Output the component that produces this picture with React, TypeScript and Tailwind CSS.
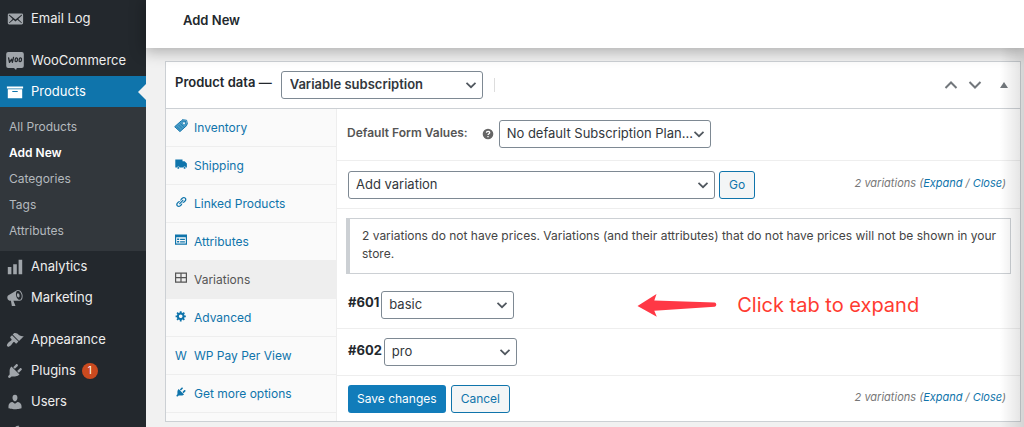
import type { ReactNode } from "react";

const dash = {
  email:
    "M19 14.5v-9c0-.83-.67-1.5-1.5-1.5H3.49c-.83 0-1.5.67-1.5 1.5v9c0 .83.67 1.5 1.5 1.5H17.5c.83 0 1.5-.67 1.5-1.5zm-1.31-9.11c.33.33.15.67-.03.84L13.6 9.95l3.9 4.06c.12.14.2.36.06.51-.13.16-.43.15-.56.05l-4.37-3.73-2.14 1.95-2.13-1.95-4.37 3.73c-.13.1-.43.11-.56-.05-.14-.15-.06-.37.06-.51l3.9-4.06-4.06-3.72c-.18-.17-.36-.51-.03-.84s.67-.17.95.07l6.24 5.04 6.25-5.04c.28-.24.62-.4.95-.07z",
  archive: "M19 4v2H1V4h18zM2 7h16v10H2V7zm11 3V9H7v1h6z",
  chart: "M18 18V2h-4v16h4zm-6 0V7H8v11h4zm-6 0v-8H2v8h4z",
  megaphone:
    "M18.15 5.94c.46 1.62.38 3.22-.02 4.48-.42 1.28-1.26 2.18-2.3 2.48-.16.06-.26.06-.4.06-.06.02-.12.02-.18.02-.06.02-.14.02-.22.02h-6.8l2.22 5.5c.02.14-.06.26-.14.34-.08.1-.24.16-.34.16H6.95c-.1 0-.26-.06-.34-.16-.08-.08-.16-.2-.14-.34l-1-5.5H4.25l-.02-.02c-.5.06-1.08-.18-1.54-.62s-.88-1.08-1.06-1.88c-.24-.8-.2-1.56-.02-2.2.18-.62.58-1.08 1.06-1.3l.02-.02 9-5.4c.1-.06.18-.1.24-.16.06-.04.14-.08.24-.12.16-.08.28-.12.5-.18 1.04-.3 2.24.1 3.22.98s1.84 2.24 2.26 3.86zm-2.58 5.98h-.02c.4-.1.74-.34 1.04-.7.58-.7.86-1.76.86-3.04 0-.64-.1-1.3-.28-1.98-.34-1.36-1.02-2.5-1.78-3.24s-1.68-1.1-2.46-.88c-.82.22-1.4.96-1.7 2-.32 1.04-.28 2.36.06 3.72.38 1.36 1 2.5 1.8 3.24.78.74 1.62 1.1 2.48.88zm-2.54-7.08c.22-.04.42-.02.62.04.38.16.76.48 1.02 1s.42 1.2.42 1.78c0 .3-.04.56-.12.8-.18.48-.44.84-.86.94-.34.1-.8-.06-1.14-.4s-.64-.86-.78-1.5c-.18-.62-.12-1.24.02-1.72s.48-.84.82-.94z",
  appearance:
    "M14.48 11.06L7.41 3.99l1.5-1.5c.5-.56 2.3-.47 3.51.32 1.21.8 1.43 1.28 2.91 2.1 1.18.64 2.45 1.26 4.45.85zm-.71.71L6.7 4.7 4.93 6.47c-.39.39-.39 1.02 0 1.41l1.06 1.06c.39.39.39 1.03 0 1.42-.6.6-1.43 1.11-2.21 1.69-.35.26-.7.53-1.01.84C1.43 14.23.4 16.08 1.4 17.07c.99 1 2.84-.03 4.18-1.36.31-.31.58-.66.85-1.02.57-.78 1.08-1.61 1.69-2.21.39-.39 1.02-.39 1.41 0l1.06 1.06c.39.39 1.02.39 1.41 0z",
  plugins:
    "M13.11 4.36L9.87 7.6 8 5.73l3.24-3.24c.35-.34 1.05-.2 1.56.32.52.51.66 1.21.31 1.55zm-8 1.77l.91-1.12 9.01 9.01-1.19.84c-.71.71-2.63 1.16-3.82 1.16H6.14L4.9 17.26c-.59.59-1.54.59-2.12 0-.59-.58-.59-1.53 0-2.12l1.24-1.24v-3.88c0-1.13.4-3.19 1.09-3.89zm7.26 3.97l3.24-3.24c.34-.35 1.04-.21 1.55.31.52.51.66 1.21.31 1.55l-3.24 3.25z",
  users:
    "M10 9.25c-2.27 0-2.73-3.44-2.73-3.44C7 4.02 7.82 2 9.97 2c2.16 0 2.98 2.02 2.71 3.81 0 0-.41 3.44-2.68 3.44zm0 2.57L12.72 10c2.39 0 4.52 2.33 4.52 4.53v2.49s-3.65 1.13-7.24 1.13c-3.65 0-7.24-1.13-7.24-1.13v-2.49c0-2.25 1.94-4.48 4.47-4.48z",
  wrench:
    "M16.68 9.77c-1.34 1.34-3.3 1.67-4.95.99l-5.41 6.52c-.99.99-2.59.99-3.58 0s-.99-2.59 0-3.57l6.52-5.42c-.68-1.65-.35-3.61.99-4.95 1.28-1.28 3.12-1.62 4.72-1.06l-2.89 2.89 2.82 2.82 2.86-2.87c.53 1.58.18 3.39-1.08 4.65zM3.81 16.210c.4.39 1.04.39 1.430 0 .4-.4.4-1.040 0-1.430-.39-.4-1.030-.4-1.430 0-.39.39-.39 1.030 0 1.430z",
  gear: "M18 12h-2.18c-.17.7-.44 1.35-.81 1.93l1.54 1.54-2.1 2.1-1.54-1.54c-.58.36-1.23.63-1.91.79V19H8v-2.18c-.68-.16-1.33-.43-1.91-.79l-1.54 1.54-2.12-2.12 1.54-1.54c-.36-.58-.63-1.23-.79-1.91H1V9.03h2.17c.16-.7.44-1.35.8-1.94L2.43 5.55l2.1-2.1 1.54 1.54c.58-.37 1.24-.64 1.93-.81V2h3v2.18c.68.16 1.33.43 1.91.79l1.54-1.54 2.12 2.12-1.54 1.54c.36.59.64 1.24.8 1.94H18V12zm-8.5 1.5c1.66 0 3-1.34 3-3s-1.34-3-3-3-3 1.34-3 3 1.34 3 3 3z",
  link: "M17.74 2.76c1.68 1.69 1.68 4.41 0 6.1l-1.53 1.52c-1.12 1.12-2.7 1.47-4.14 1.09l2.62-2.61.76-.77.76-.76c.84-.84.84-2.2 0-3.04-.84-.85-2.2-.85-3.04 0l-.77.76-3.38 3.38c-.37-1.44-.02-3.02 1.1-4.14l1.52-1.53c1.69-1.68 4.42-1.68 6.1 0zM8.59 13.43l5.34-5.34c.42-.42.42-1.1 0-1.52-.44-.43-1.13-.39-1.53 0l-5.33 5.34c-.42.42-.42 1.1 0 1.52.44.43 1.13.39 1.52 0zm-.76 2.29l4.14-4.15c.38 1.44.03 3.02-1.09 4.14l-1.52 1.53c-1.69 1.68-4.41 1.68-6.1 0-1.68-1.68-1.68-4.42 0-6.1l1.53-1.52c1.12-1.12 2.7-1.47 4.14-1.1l-4.14 4.15c-.85.84-.85 2.2 0 3.05.84.84 2.2.84 3.04 0z",
  truck:
    "M.5 2.500h12v3h3.500L19.800 9v7h-1.500a2.300 2.300 0 0 0-4.500 0H7.800a2.300 2.300 0 0 0-4.500 0H.5V2.500zM5.500 14.900a1.600 1.600 0 1 1 0 3.200 1.600 1.600 0 0 1 0-3.200zM16 14.900a1.600 1.600 0 1 1 0 3.200 1.600 1.600 0 0 1 0-3.200z",
  form: "M0 1h20v17H0V1zm2 4.500v10.500h16V5.500H2zm1.500 2h3.500v2.500H3.500v-2.500zm5 .3h8v2h-8v-2zm-5 4h3.500v2.500H3.500v-2.500zm5 .3h8v2h-8v-2z",
  tables: "M0 1h20v17H0V1zm2 2v5.500h7V3H2zm9 0v5.500h7V3h-7zM2 10.500V16h7v-5.500H2zm9 0V16h7v-5.500h-7z",
};

function Dash({ d, className }: { d: string; className: string }) {
  return (
    <svg viewBox="0 0 20 20" fill="currentColor" fillRule="evenodd" aria-hidden="true" className={className}>
      <path d={d} />
    </svg>
  );
}

function WooIcon() {
  return (
    <svg viewBox="0 0 20 20" aria-hidden="true" className="size-5">
      <path d="M3.200 1h13.600a2 2 0 0 1 2 2v12a2 2 0 0 1-2 2h-5l-.8 2L9 17H3.200a2 2 0 0 1-2-2V3a2 2 0 0 1 2-2z" fill="#a0a5aa" />
      <g fill="none" stroke="#23282d" strokeWidth="1.300" strokeLinecap="round" strokeLinejoin="round">
        <path d="M3.600 6.800l.9 4.500 2-3 .9 3 1.100-5" />
        <ellipse cx="11.300" cy="8.800" rx="1.200" ry="1.900" transform="rotate(12 11.300 8.800)" />
        <ellipse cx="15.300" cy="8.800" rx="1.200" ry="1.900" transform="rotate(12 15.300 8.800)" />
      </g>
    </svg>
  );
}

function TagIcon() {
  return (
    <svg viewBox="0 0 20 20" aria-hidden="true" className="size-3.5">
      <path d="M1 11L10.500 2.500l6 .5L18 9.500 8.500 18z" fill="#4a9cc6" />
      <path d="M1 11L10.500 2.500l6 .5L18 9.500 8.500 18zM11.500 1l6.500.8 1.300 6" fill="none" stroke="#0f74ab" strokeWidth="1.400" strokeLinejoin="round" />
      <path d="M3.800 10.500l5.200 5M6.500 8.500l5 5M9 6.500l5 4.500" stroke="#0f74ab" strokeWidth="1" />
      <circle cx="14.300" cy="6" r="1.400" fill="#fafafa" />
    </svg>
  );
}

function MenuItem({ icon, label, active, badge }: { icon: ReactNode; label: string; active?: boolean; badge?: number }) {
  return (
    <a
      href="#"
      className={
        active
          ? "relative flex h-[31px] items-center gap-1.5 bg-[#0f74ab] pl-[5px] text-[13px] text-white"
          : "flex h-[31px] items-center gap-1.5 pl-[5px] text-[13px] text-[#eeeeee]"
      }
    >
      <span className={active ? "flex w-5 justify-center text-white" : "flex w-5 justify-center text-[#a0a5aa]"}>{icon}</span>
      <span>{label}</span>
      {badge !== undefined && (
        <span className="flex size-4 items-center justify-center rounded-full bg-[#ca4a1f] text-[10px] text-white">{badge}</span>
      )}
      {active && (
        <span className="absolute top-1/2 right-0 -translate-y-1/2 border-y-8 border-r-8 border-y-transparent border-r-[#f1f1f1]" />
      )}
    </a>
  );
}

function Sidebar() {
  const sub = ["All Products", "Add New", "Categories", "Tags", "Attributes"];
  const cls = "size-[18px]";
  return (
    <nav className="w-[146px] shrink-0 overflow-hidden bg-[#23282d] pt-[3px]">
      <MenuItem icon={<Dash d={dash.email} className={cls} />} label="Email Log" />
      <div className="h-[11px]" />
      <MenuItem icon={<WooIcon />} label="WooCommerce" />
      <MenuItem icon={<Dash d={dash.archive} className={cls} />} label="Products" active />
      <ul className="bg-[#32373c] pt-[7px] pb-[7px]">
        {sub.map((s) => (
          <li key={s}>
            <a
              href="#"
              className={
                s === "Add New"
                  ? "flex h-[26px] items-center pl-[9px] text-[12px] font-semibold text-white"
                  : "flex h-[26px] items-center pl-[9px] text-[12px] text-[#b4b9be]"
              }
            >
              {s}
            </a>
          </li>
        ))}
      </ul>
      <MenuItem icon={<Dash d={dash.chart} className={cls} />} label="Analytics" />
      <MenuItem icon={<Dash d={dash.megaphone} className={cls} />} label="Marketing" />
      <div className="h-[11px]" />
      <MenuItem icon={<Dash d={dash.appearance} className={cls} />} label="Appearance" />
      <MenuItem icon={<Dash d={dash.plugins} className={cls} />} label="Plugins" badge={1} />
      <MenuItem icon={<Dash d={dash.users} className={cls} />} label="Users" />
      <a href="#" aria-label="Tools" className="flex h-[31px] items-center pl-1.5 text-[#a0a5aa]">
        <Dash d={dash.wrench} className={cls} />
      </a>
    </nav>
  );
}

function Select({ label, value, wrap, bold }: { label: string; value: string; wrap: string; bold?: boolean }) {
  return (
    <span className={`relative block ${wrap}`}>
      <select
        aria-label={label}
        defaultValue={value}
        className={
          bold
            ? "h-7 w-full appearance-none rounded-[3px] border border-[#7e8993] bg-white pr-6 pl-2 text-[13px] font-semibold text-[#32373c]"
            : "h-7 w-full appearance-none rounded-[3px] border border-[#7e8993] bg-white pr-4 pl-[7px] text-[13px] text-[#32373c]"
        }
      >
        <option>{value}</option>
      </select>
      <svg viewBox="0 0 12 12" aria-hidden="true" className="pointer-events-none absolute top-2 right-[6px] size-3">
        <path d="M1.500 3.800L6 8.200l4.500-4.400" fill="none" stroke="#50575e" strokeWidth="1.700" />
      </svg>
    </span>
  );
}

function Tab({ icon, label, active }: { icon: ReactNode; label: string; active?: boolean }) {
  return (
    <a
      href="#"
      className={
        active
          ? "flex h-[38px] items-center gap-1.5 border-b border-[#eeeeee] bg-[#eeeeee] pl-2 text-[12px] text-[#555555]"
          : "flex h-[38px] items-center gap-1.5 border-b border-[#eeeeee] pl-2 text-[12px] text-[#0f74ab]"
      }
    >
      <span className="flex w-3.5 justify-center pb-[3px]">{icon}</span>
      <span>{label}</span>
    </a>
  );
}

function Count() {
  return (
    <span className="ml-auto pb-[3px] text-[11px] text-[#777777] italic">
      2 variations (
      <a href="#" className="text-[#0f74ab]">Expand</a> / <a href="#" className="text-[#0f74ab]">Close</a>)
    </span>
  );
}

function ProductData() {
  const ic = "size-3";
  return (
    <section className="mt-[13px] mr-[3px] ml-[19px] border border-[#ccd0d4] bg-white">
      <header className="flex h-[47px] items-center border-b border-[#ccd0d4] pr-2 pl-[9px]">
        <h2 className="pb-1 text-[13px] font-semibold text-[#23282d]">Product data —</h2>
        <Select label="Product type" value="Variable subscription" wrap="ml-[9px] w-[202px]" bold />
        <span className="ml-[11px] h-[14px] w-px bg-[#dddddd]" />
        <div className="ml-auto flex items-center text-[#72777c]">
          <button type="button" aria-label="Move up" className="flex w-6 justify-center">
            <svg viewBox="0 0 14 10" className="h-[10px] w-[14px]"><path d="M1.500 8L7 2.500 12.500 8" fill="none" stroke="currentColor" strokeWidth="2" /></svg>
          </button>
          <button type="button" aria-label="Move down" className="flex w-6 justify-center">
            <svg viewBox="0 0 14 10" className="h-[10px] w-[14px]"><path d="M1.500 2L7 7.500 12.500 2" fill="none" stroke="currentColor" strokeWidth="2" /></svg>
          </button>
          <button type="button" aria-label="Toggle panel" className="ml-[9px] flex w-4 justify-center">
            <svg viewBox="0 0 8 6" className="h-[6px] w-[8px]"><path d="M0 6L4 0l4 6z" fill="currentColor" /></svg>
          </button>
        </div>
      </header>
      <div className="flex">
        <nav className="w-[171px] shrink-0 border-r border-[#eeeeee] bg-[#fafafa] pb-2">
          <Tab icon={<TagIcon />} label="Inventory" />
          <Tab icon={<Dash d={dash.truck} className={ic} />} label="Shipping" />
          <Tab icon={<Dash d={dash.link} className={ic} />} label="Linked Products" />
          <Tab icon={<Dash d={dash.form} className={ic} />} label="Attributes" />
          <Tab icon={<Dash d={dash.tables} className={ic} />} label="Variations" active />
          <Tab icon={<Dash d={dash.gear} className={ic} />} label="Advanced" />
          <Tab icon={<span className="pt-[3px]">W</span>} label="WP Pay Per View" />
          <Tab icon={<Dash d={dash.plugins} className={ic} />} label="Get more options" />
        </nav>
        <div className="min-w-0 flex-1">
          <div className="flex h-[52px] items-center border-b border-[#eeeeee] pb-px pl-[10px]">
            <span className="pb-[3px] text-[12px] font-semibold text-[#555555]">Default Form Values:</span>
            <svg viewBox="0 0 12 12" role="img" aria-label="Help" className="ml-[14px] size-3">
              <circle cx="6" cy="6" r="5.300" fill="#666666" />
              <path d="M4.400 4.700c0-1.900 3.300-1.900 3.300 0C7.700 5.800 6 5.800 6 7.100M6 8.100v1.200" fill="none" stroke="#ffffff" strokeWidth="1.300" />
            </svg>
            <Select label="Default subscription plan" value="No default Subscription Plan..." wrap="ml-[5px] w-[212px]" />
          </div>
          <div className="flex h-12 items-center border-b border-[#eeeeee] pr-[14px] pl-[11px]">
            <Select label="Variation action" value="Add variation" wrap="w-[367px]" />
            <button type="button" className="ml-1 h-7 rounded-[3px] border border-[#0f74ab] bg-[#f3f5f6] px-[9px] text-[12px] text-[#0f74ab]">
              Go
            </button>
            <Count />
          </div>
          <p className="mt-[9px] mr-[9px] ml-[9px] border border-l-4 border-[#ccd0d4] bg-white px-3 pt-2 pb-[10px] text-[12px] leading-[18px] text-[#444444]">
            2 variations do not have prices. Variations (and their attributes) that do not have prices will not be shown in your store.
          </p>
          <div className="mt-[7px] flex h-12 items-center border-b border-[#eeeeee] pl-[11px]">
            <strong className="pb-[3px] text-[13px] font-bold text-[#23282d]">#601</strong>
            <Select label="Plan for variation 601" value="basic" wrap="ml-[2px] w-[133px]" />
            <svg viewBox="0 0 80 24" role="img" aria-label="Arrow" className="ml-[123px] h-6 w-20">
              <path d="M0.500 14.500L19.500 2.500 17.300 9l60.200 2c2.400.3 2.400 3.900 0 4.200L17.300 19.300l2.500 6z" transform="translate(0 -1.500)" fill="#ff3845" />
            </svg>
            <span className="ml-[20px] text-[20px] text-[#ff3b30]">Click tab to expand</span>
          </div>
          <div className="flex h-[47px] items-center border-b border-[#eeeeee] pl-[11px]">
            <strong className="pb-[3px] text-[13px] font-bold text-[#23282d]">#602</strong>
            <Select label="Plan for variation 602" value="pro" wrap="ml-[2px] w-[133px]" />
          </div>
          <div className="flex h-[45px] items-center pr-[14px] pl-[11px]">
            <button type="button" className="h-7 rounded-[3px] bg-[#117cba] px-[9px] text-[12px] text-white">Save changes</button>
            <button type="button" className="ml-[5px] h-7 rounded-[3px] border border-[#0f74ab] bg-[#f3f5f6] px-[9px] text-[12px] text-[#0f74ab]">
              Cancel
            </button>
            <Count />
          </div>
        </div>
      </div>
    </section>
  );
}

export default function App() {
  return (
    <div className="flex h-screen min-h-0 overflow-hidden bg-[#f1f1f1] font-['Inter',sans-serif]">
      <Sidebar />
      <main className="relative flex min-w-0 flex-1 flex-col">
        <header className="z-20 flex h-12 shrink-0 items-center bg-white pb-1.5 pl-[37px] shadow-[0_2px_14px_2px_rgba(0,0,0,0.28)]">
          <h1 className="text-[13px] font-semibold text-[#23282d]">Add New</h1>
        </header>
        <ProductData />
        <div className="pointer-events-none absolute top-12 right-0 bottom-0 z-10 w-6 bg-linear-to-r from-transparent to-black/12" />
      </main>
    </div>
  );
}
